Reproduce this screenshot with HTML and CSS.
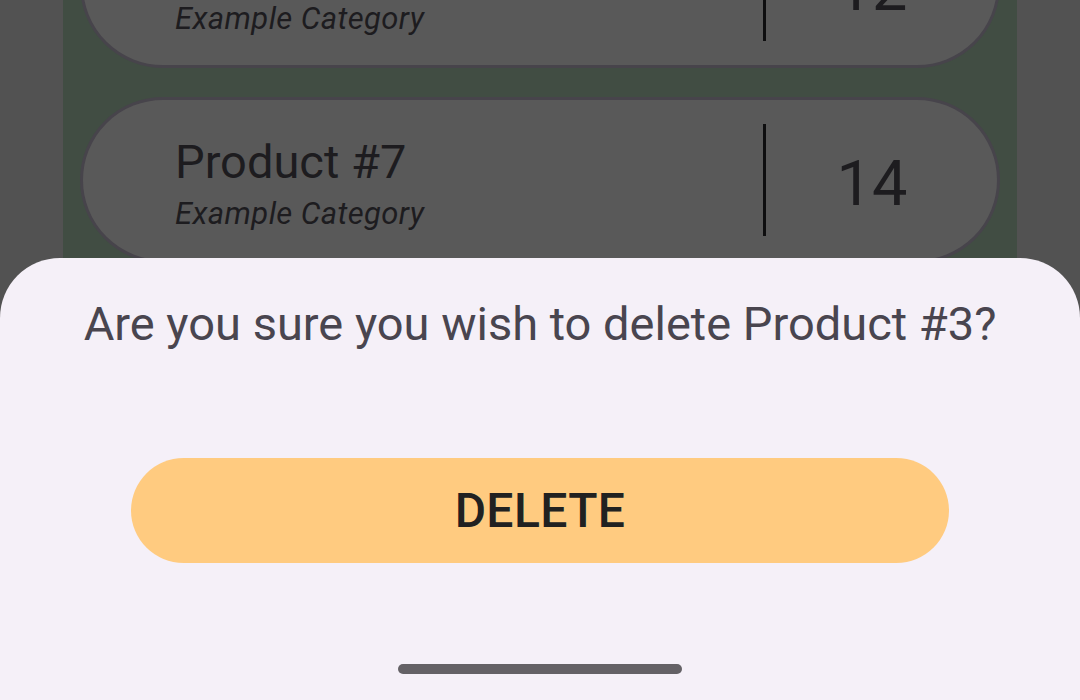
FILE: index.html
```html
<!DOCTYPE html>
<html lang="en">
<head>
<meta charset="utf-8">
<title>Delete product</title>
<link rel="stylesheet" href="styles.css">
</head>
<body>
<div class="screen">
  <div class="list">
    <div class="card">
      <div class="info">
        <div class="title">Product #6</div>
        <div class="category">Example Category</div>
      </div>
      <div class="divider"></div>
      <div class="qty">12</div>
    </div>
    <div class="card">
      <div class="info">
        <div class="title">Product #7</div>
        <div class="category">Example Category</div>
      </div>
      <div class="divider"></div>
      <div class="qty">14</div>
    </div>
  </div>
  <div class="sheet">
    <p class="message">Are you sure you wish to delete Product #3?</p>
    <button class="delete-btn">DELETE</button>
    <div class="handle"></div>
  </div>
</div>
</body>
</html>
```
FILE: styles.css
```css
html, body {
  margin: 0;
  padding: 0;
  height: 100%;
  overflow: hidden;
}
body {
  background: #525252;
  font-family: Roboto, "Noto Sans", sans-serif;
}
.screen {
  position: relative;
  width: 1080px;
  height: 700px;
  overflow: hidden;
}
.list {
  margin: -98px 63px 0;
  padding: 0 17px;
  background: #414d43;
  display: flex;
  flex-direction: column;
  gap: 29px;
  height: 900px;
}
.card {
  height: 160px;
  flex: none;
  border: 3px solid #47444b;
  border-radius: 83px;
  background: #595959;
  display: grid;
  grid-template-columns: 1fr 3px 212px;
  padding-right: 19px;
  color: #1d1c1f;
}
.info {
  padding: 36px 0 0 92px;
}
.title {
  font-size: 47px;
  line-height: 52px;
}
.category {
  margin-top: 8px;
  font-size: 31px;
  line-height: 36px;
  letter-spacing: 0.4px;
  font-style: italic;
}
.divider {
  align-self: center;
  height: 112px;
  background: #0e0e0f;
}
.qty {
  align-self: center;
  text-align: center;
  font-size: 63px;
  line-height: 63px;
  margin-top: 7px;
}
.sheet {
  position: absolute;
  top: 258px;
  left: 0;
  right: 0;
  bottom: 0;
  background: #f5f0f8;
  border-radius: 60px 60px 0 0;
  display: flex;
  flex-direction: column;
  align-items: center;
}
.message {
  margin: 38px 0 0;
  font-size: 47px;
  line-height: 56px;
  color: #49454f;
}
.delete-btn {
  margin-top: 106px;
  width: 818px;
  height: 105px;
  border: 0;
  border-radius: 53px;
  background: #ffcb80;
  color: #212121;
  font-family: Roboto, "Noto Sans", sans-serif;
  font-size: 48px;
  font-weight: 500;
  letter-spacing: 0.4px;
}
.handle {
  margin-top: 101px;
  width: 284px;
  height: 10px;
  border-radius: 5px;
  background: #646166;
}
```
